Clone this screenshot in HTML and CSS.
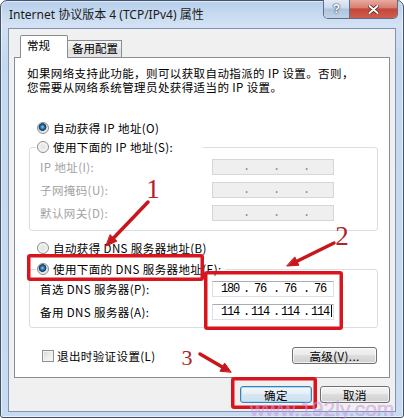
FILE: index.html
```html
<!DOCTYPE html>
<html lang="zh-CN">
<head>
<meta charset="utf-8">
<title>Internet 协议版本 4 (TCP/IPv4) 属性</title>
<link rel="stylesheet" href="styles.css">
</head>
<body>
<div class="window">
  <div class="titlebar">
    <span class="title">Internet 协议版本 4 (TCP/IPv4) 属性</span>
    <div class="caption-btns">
      <span class="cap-btn cap-help">?</span>
      <span class="cap-btn cap-close">
        <svg width="11" height="9" viewBox="0 0 11 9">
          <path d="M1.5 1 L9.5 8 M9.5 1 L1.5 8" stroke="#5a1f1a" stroke-width="3.6" stroke-linecap="round"/>
          <path d="M1.5 1 L9.5 8 M9.5 1 L1.5 8" stroke="#fff" stroke-width="2" stroke-linecap="round"/>
        </svg>
      </span>
    </div>
  </div>

  <div class="client">
    <div class="tabs">
      <div class="tab active">常规</div>
      <div class="tab">备用配置</div>
    </div>

    <div class="panel">
      <p class="intro">
        <span>如果网络支持此功能，则可以获取自动指派的 IP 设置。否则，</span>
        <span>您需要从网络系统管理员处获得适当的 IP 设置。</span>
      </p>

      <div class="option auto-ip"><span class="radio on"></span>自动获得 IP 地址(O)</div>

      <div class="group">
        <div class="option group-title"><span class="radio"></span>使用下面的 IP 地址(S):</div>
        <div class="field disabled">
          <span class="field-label">IP 地址(I):</span>
          <div class="ipbox">
            <span class="ip-part"></span><span class="ip-dot">.</span><span class="ip-part"></span><span class="ip-dot">.</span><span class="ip-part"></span><span class="ip-dot">.</span><span class="ip-part"></span>
          </div>
        </div>
        <div class="field disabled">
          <span class="field-label">子网掩码(U):</span>
          <div class="ipbox">
            <span class="ip-part"></span><span class="ip-dot">.</span><span class="ip-part"></span><span class="ip-dot">.</span><span class="ip-part"></span><span class="ip-dot">.</span><span class="ip-part"></span>
          </div>
        </div>
        <div class="field disabled">
          <span class="field-label">默认网关(D):</span>
          <div class="ipbox">
            <span class="ip-part"></span><span class="ip-dot">.</span><span class="ip-part"></span><span class="ip-dot">.</span><span class="ip-part"></span><span class="ip-dot">.</span><span class="ip-part"></span>
          </div>
        </div>
      </div>

      <div class="option auto-dns"><span class="radio"></span>自动获得 DNS 服务器地址(B)</div>

      <div class="group dns">
        <div class="option group-title"><span class="radio on"></span>使用下面的 DNS 服务器地址(E):</div>
        <div class="field">
          <span class="field-label">首选 DNS 服务器(P):</span>
          <div class="ipbox">
            <span class="ip-part">180</span><span class="ip-dot">.</span><span class="ip-part">76</span><span class="ip-dot">.</span><span class="ip-part">76</span><span class="ip-dot">.</span><span class="ip-part">76</span>
          </div>
        </div>
        <div class="field">
          <span class="field-label">备用 DNS 服务器(A):</span>
          <div class="ipbox">
            <span class="ip-part">114</span><span class="ip-dot">.</span><span class="ip-part">114</span><span class="ip-dot">.</span><span class="ip-part">114</span><span class="ip-dot">.</span><span class="ip-part">114<i class="caret"></i></span>
          </div>
        </div>
      </div>

      <div class="panel-footer">
        <div class="option check-row"><span class="checkbox"></span>退出时验证设置(L)</div>
        <button class="btn btn-adv">高级(V)...</button>
      </div>
    </div>

    <div class="dialog-btns">
      <button class="btn btn-ok">确定</button>
      <button class="btn btn-cancel">取消</button>
    </div>
  </div>
</div>

<svg class="marks" width="404" height="419" viewBox="0 0 404 419">
  <g fill="none" stroke="#d8141c" stroke-width="3.5">
    <rect x="28.75" y="255.75" width="173.5" height="23.5" rx="1.5"/>
    <rect x="205.75" y="272.75" width="135.5" height="55.5" rx="1.5"/>
    <rect x="232.75" y="378.75" width="82.5" height="28.5" rx="1.5"/>
  </g>
  <g fill="#c8161d" stroke="#c8161d" stroke-linecap="round">
    <line x1="148" y1="202" x2="113.6" y2="238" stroke-width="3.5"/>
    <polygon points="106,246 116.9,241.1 110.3,234.9" stroke-width="1"/>
    <line x1="334" y1="243" x2="296.9" y2="261.2" stroke-width="3.5"/>
    <polygon points="287,266 298.9,265.2 294.9,257.2" stroke-width="1"/>
    <line x1="200" y1="354" x2="222.3" y2="367" stroke-width="3.5"/>
    <polygon points="231,372 224.6,363.1 220.1,370.9" stroke-width="1"/>
  </g>
  <g class="mark-num">
    <text x="153" y="198" font-size="27">1</text>
    <text x="342" y="245" font-size="27">2</text>
    <text x="187" y="365" font-size="22">3</text>
  </g>
  <text class="watermark" x="250" y="416">www.192ly.com</text>
</svg>
</body>
</html>
```

FILE: styles.css
```css
* {
  box-sizing: border-box;
}

html,
body {
  margin: 0;
}

body {
  position: relative;
  width: 404px;
  height: 419px;
  overflow: hidden;
  background: #fff;
  font-family: "Noto Sans CJK SC", sans-serif;
  font-size: 11.5px;
  color: #000;
}

/* ---- window frame ---- */
.window {
  width: 404px;
  height: 418px;
  border: 1px solid #42526a;
  border-radius: 7px 7px 3px 3px;
  background: linear-gradient(180deg, #b7cfea 0, #d3e2f4 24px, #c4d8ef 60px, #c8dbf0 100%);
  box-shadow: inset 0 0 0 1px rgba(255, 255, 255, 0.55);
  padding: 0 7px 5px 7px;
  display: flex;
  flex-direction: column;
}

.titlebar {
  height: 27px;
  display: flex;
  align-items: center;
}

.title {
  padding-left: 1px;
  font-family: "Noto Sans", "Noto Sans CJK SC", sans-serif;
  font-size: 12px;
  line-height: 16px;
  color: #1b1b1b;
  white-space: nowrap;
}

.caption-btns {
  margin-left: auto;
  margin-right: -2px;
  align-self: flex-start;
  margin-top: -1px;
  display: flex;
  border: 1px solid #5f6f86;
  border-top: none;
  border-radius: 0 0 5px 5px;
  overflow: hidden;
}

.cap-btn {
  height: 18px;
  display: flex;
  align-items: center;
  justify-content: center;
}

.cap-help {
  width: 26px;
  border-right: 1px solid #5f6f86;
  background: linear-gradient(180deg, #e4ecf7 0, #cbd9ea 45%, #aec3dc 50%, #c0d3e8 100%);
  font-family: "Liberation Sans", sans-serif;
  font-weight: bold;
  font-size: 12px;
  color: #fff;
  text-shadow: 0 0 2px #22364f, 0 0 1px #22364f;
}

.cap-close {
  width: 47px;
  background: linear-gradient(180deg, #e8aa9f 0, #d98073 42%, #c4473b 50%, #cf5d4d 100%);
}

/* ---- client area ---- */
.client {
  height: 384px;
  border: 1px solid #7f94b2;
  background: #f0f0f0;
  padding: 6px 5px 0 5px;
  display: flex;
  flex-direction: column;
}

.tabs {
  height: 22px;
  display: flex;
  align-items: flex-end;
  padding-left: 6px;
  position: relative;
  z-index: 1;
}

.tab {
  height: 17px;
  width: 54px;
  border: 1px solid #898c95;
  border-left: none;
  border-bottom: none;
  background: linear-gradient(180deg, #f4f4f4 0, #ebebeb 50%, #dedede 50%, #e5e5e5 100%);
  padding-left: 4px;
  line-height: 15px;
  white-space: nowrap;
}

.tab.active {
  height: 23px;
  width: 48px;
  margin-bottom: -1px;
  border-left: 1px solid #898c95;
  border-radius: 2px 2px 0 0;
  background: #fff;
  padding: 2px 0 0 6px;
  line-height: 14px;
}

.panel {
  height: 321px;
  background: #fff;
  border: 1px solid #898c95;
  display: flex;
  flex-direction: column;
  align-items: flex-start;
  letter-spacing: 0.4px;
}

.intro {
  margin: 8px 0 0 12px;
  line-height: 14px;
}

.intro span {
  display: block;
  height: 14px;
  white-space: nowrap;
}

.option {
  display: flex;
  align-items: center;
  gap: 4px;
  height: 16px;
  white-space: nowrap;
}

.radio {
  flex: none;
  width: 12px;
  height: 12px;
  border-radius: 50%;
  border: 1px solid #8a8c8e;
  background: radial-gradient(circle at 50% 50%, #e2e2e2 0, #ececec 40%, #f8f8f8 75%, #dcdcdc 100%);
}

.radio.on {
  background: radial-gradient(circle at 45% 40%, #9fd2f2 0, #3a86bd 1.5px, #17476f 3px, #1b4a70 3.6px, #d9dde2 4.2px, #f4f4f4 80%);
}

.checkbox {
  flex: none;
  width: 12px;
  height: 12px;
  border: 1px solid #8e8f8f;
  background: linear-gradient(135deg, #d6d6d6 0, #ececec 50%, #fbfbfb 100%);
  box-shadow: inset 0 0 0 1px #f4f4f4;
}

.auto-ip {
  margin: 26px 0 0 22px;
}

.auto-dns {
  margin: 9px 0 0 22px;
}

/* ---- group boxes ---- */
.group {
  margin: 11px 0 0 14px;
  width: 349px;
  border: 1px solid #d5dfe5;
  border-radius: 3px;
  padding: 0 0 9px 10px;
}

.group.dns {
  margin-top: 13px;
  padding-bottom: 7px;
}

.group-title {
  margin: -9px 0 0 -4px;
  padding-left: 1px;
  width: 167px;
  background: #fff;
}

.group.dns .group-title {
  width: 190px;
}

.field {
  display: flex;
  align-items: center;
  height: 16px;
  margin-top: 7px;
}

.group-title + .field {
  margin-top: 4px;
}

.field-label {
  width: 172px;
  white-space: nowrap;
}

.field.disabled .field-label {
  color: #a2a2a2;
}

.ipbox {
  width: 122px;
  height: 16px;
  display: flex;
  padding-left: 4px;
  background: #fff;
  border: 1px solid #dbdfe6;
  border-top-color: #abadb3;
  font-family: "Liberation Mono", monospace;
  font-size: 12px;
  line-height: 14px;
  letter-spacing: 0;
}

.field.disabled .ipbox {
  background: #efefef;
  border-color: #d6d6d6;
  color: #8a8a8a;
}

.ip-part {
  width: 26px;
  text-align: center;
  letter-spacing: -1.2px;
  white-space: nowrap;
}

.ip-dot {
  width: 4px;
  text-align: center;
}

.caret {
  display: inline-block;
  width: 1px;
  height: 12px;
  margin-left: 2px;
  margin-right: -3px;
  vertical-align: -2px;
  background: #000;
}

/* ---- footer rows ---- */
.panel-footer {
  align-self: stretch;
  display: flex;
  align-items: center;
  height: 17px;
  margin: 19px 12px 0 27px;
}

.check-row {
  gap: 3px;
}

.btn {
  height: 17px;
  padding: 0;
  display: flex;
  align-items: center;
  justify-content: center;
  border: 1px solid #707070;
  border-radius: 3px;
  background: linear-gradient(180deg, #f4f4f4 0, #ebebeb 45%, #dddddd 50%, #d0d0d0 100%);
  box-shadow: inset 0 0 0 1px rgba(255, 255, 255, 0.7);
  font-family: "Noto Sans CJK SC", sans-serif;
  font-size: 11.5px;
  letter-spacing: 0.4px;
  color: #000;
}

.btn-adv {
  margin-left: auto;
  width: 85px;
}

.dialog-btns {
  display: flex;
  justify-content: flex-end;
  gap: 8px;
  margin-top: 8px;
}

.btn-ok {
  width: 72px;
  border-color: #3c7fb1;
  background: linear-gradient(180deg, #f3f8fc 0, #e6eff6 45%, #d8e6f1 50%, #cfe0ee 100%);
  box-shadow: inset 0 0 0 1px #a9d8f5;
}

.btn-cancel {
  width: 70px;
}

/* ---- annotation layer ---- */
.marks {
  position: absolute;
  left: 0;
  top: 0;
  pointer-events: none;
}

.mark-num text {
  font-family: "Liberation Serif", serif;
  fill: #b1232a;
  text-anchor: middle;
}

.watermark {
  font-family: "Liberation Sans", sans-serif;
  font-size: 21px;
  fill: rgba(208, 160, 226, 0.55);
  stroke: rgba(190, 130, 215, 0.35);
  stroke-width: 0.6;
}
```
